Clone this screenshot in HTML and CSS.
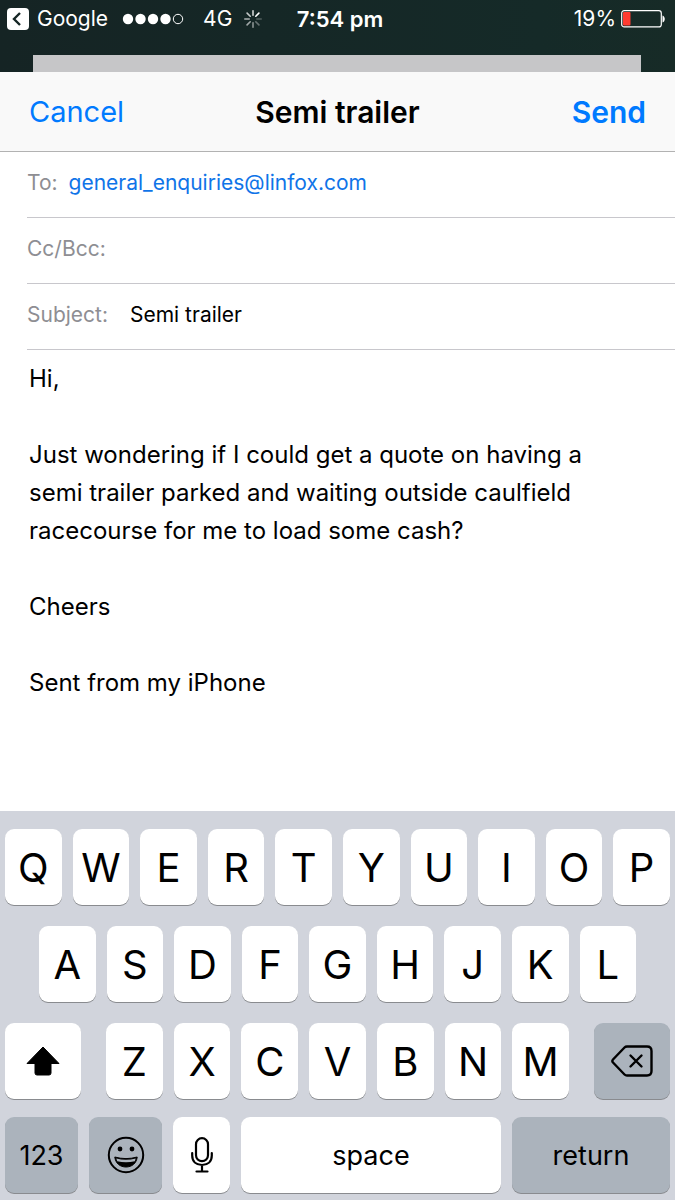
FILE: index.html
```html
<!DOCTYPE html>
<html lang="en">

<head>
    <meta charset="UTF-8">
    <meta name="viewport" content="width=device-width, initial-scale=1.0">
    <title>Semi trailer</title>
    <link rel="stylesheet" href="styles.css">
</head>

<body>
    <div class="phone">
        <div class="top">
            <div class="status">
                <div class="status-left">
                    <a href="#" class="back">
                        <svg width="22" height="22" viewBox="0 0 22 22">
                            <rect width="22" height="22" rx="4" fill="#fff" />
                            <path d="M13 5 7 11l6 6" fill="none" stroke="#152625" stroke-width="2.4" />
                        </svg>
                        <span>Google</span>
                    </a>
                    <svg class="signal" width="62" height="12" viewBox="0 0 62 12">
                        <g fill="#fff">
                            <circle cx="6" cy="6" r="5.2" />
                            <circle cx="18.5" cy="6" r="5.2" />
                            <circle cx="31" cy="6" r="5.2" />
                            <circle cx="43.5" cy="6" r="5.2" />
                        </g>
                        <circle cx="56" cy="6" r="4.7" fill="none" stroke="#fff" />
                    </svg>
                    <span class="network">4G</span>
                    <svg class="spinner" width="18" height="18" viewBox="0 0 18 18" stroke="#fff" stroke-width="1.6" stroke-linecap="round">
                        <path d="M9 .8v4.4" opacity=".8" />
                        <path d="m14.9 3.1-3.1 3.1" />
                        <path d="M17.2 9h-4.4" opacity=".25" />
                        <path d="m14.9 14.9-3.1-3.1" opacity=".35" />
                        <path d="M9 17.2v-4.4" opacity=".5" />
                        <path d="m3.1 14.9 3.1-3.1" opacity=".6" />
                        <path d="M.8 9h4.4" opacity=".65" />
                        <path d="m3.1 3.1 3.1 3.1" opacity=".75" />
                    </svg>
                </div>
                <div class="clock">7:54 pm</div>
                <div class="status-right">
                    <span>19%</span>
                    <svg width="44" height="18" viewBox="0 0 44 18">
                        <rect x=".7" y=".7" width="39.6" height="16.2" rx="2.5" fill="none" stroke="#fff" stroke-width="1.2" />
                        <rect x="2" y="2" width="7.5" height="13.6" rx="1" fill="#ff3b30" />
                        <path d="M41.5 5.5c3 1 3 6 0 7z" fill="#fff" />
                    </svg>
                </div>
            </div>
            <div class="behind"></div>
        </div>

        <header class="nav">
            <button class="nav-btn">Cancel</button>
            <h1>Semi trailer</h1>
            <button class="nav-btn send">Send</button>
        </header>

        <main class="mail">
            <div class="field">
                <label for="to">To:</label>
                <input type="email" id="to" class="to" value="general_enquiries@linfox.com">
            </div>
            <div class="field">
                <label for="cc">Cc/Bcc:</label>
                <input type="text" id="cc">
            </div>
            <div class="field">
                <label for="subject">Subject:</label>
                <input type="text" id="subject" class="subject" value="Semi trailer">
            </div>
            <textarea class="message" aria-label="Message">Hi,

Just wondering if I could get a quote on having a semi trailer parked and waiting outside caulfield racecourse for me to load some cash?

Cheers

Sent from my iPhone</textarea>
        </main>

        <div class="keyboard">
            <div class="row">
                <button class="key">Q</button>
                <button class="key">W</button>
                <button class="key">E</button>
                <button class="key">R</button>
                <button class="key">T</button>
                <button class="key">Y</button>
                <button class="key">U</button>
                <button class="key">I</button>
                <button class="key">O</button>
                <button class="key">P</button>
            </div>
            <div class="row row-two">
                <button class="key">A</button>
                <button class="key">S</button>
                <button class="key">D</button>
                <button class="key">F</button>
                <button class="key">G</button>
                <button class="key">H</button>
                <button class="key">J</button>
                <button class="key">K</button>
                <button class="key">L</button>
            </div>
            <div class="row row-three">
                <button class="key shift" aria-label="Shift">
                    <svg width="34" height="30" viewBox="0 0 34 30">
                        <path d="M17 1 33 17.5H25V27q0 2-2 2H11q-2 0-2-2v-9.5H1z" stroke="#000" stroke-linejoin="round" />
                    </svg>
                </button>
                <button class="key">Z</button>
                <button class="key">X</button>
                <button class="key">C</button>
                <button class="key">V</button>
                <button class="key">B</button>
                <button class="key">N</button>
                <button class="key">M</button>
                <button class="key dark delete" aria-label="Delete">
                    <svg width="42" height="32" viewBox="0 0 42 32" fill="none" stroke="#000" stroke-width="2.4" stroke-linecap="round" stroke-linejoin="round">
                        <path d="M16 1.500H36q4.500 0 4.500 4.500V26q0 4.500-4.500 4.500H16q-1.500 0-2.500-1L2 17.500q-1.300-1.500 0-3L13.500 2.500q1-1 2.500-1z" />
                        <path d="m19.500 10.500 11 11m0-11-11 11" />
                    </svg>
                </button>
            </div>
            <div class="row row-four">
                <button class="key dark word">123</button>
                <button class="key dark" aria-label="Emoji">
                    <svg width="38" height="38" viewBox="0 0 38 38">
                        <circle cx="19" cy="19" r="17.2" fill="none" stroke="#000" stroke-width="2" />
                        <circle cx="13" cy="13" r="2.4" />
                        <circle cx="25" cy="13" r="2.4" />
                        <path d="M7.800 21q11.200 3.200 22.400 0c-.7 6.500-5.500 10-11.200 10S8.500 27.500 7.800 21z" stroke="#000" stroke-linejoin="round" />
                        <path d="M9.300 22.500q9.700 2.600 19.400 0l-.9 2.700q-8.800 2.200-17.600 0z" fill="#abb3bc" />
                    </svg>
                </button>
                <button class="key" aria-label="Dictate">
                    <svg width="22" height="36" viewBox="0 0 22 36" fill="none" stroke="#000" stroke-width="2.2" stroke-linecap="round">
                        <rect x="5" y="1.2" width="12" height="23" rx="6" />
                        <path d="M1.200 16v2.500c0 6 4 9.500 9.800 9.500s9.800-3.500 9.800-9.500V16M11 28v6.500M5.500 34.500h11" />
                    </svg>
                </button>
                <button class="key word">space</button>
                <button class="key dark word">return</button>
            </div>
        </div>
    </div>
</body>

</html>
```
FILE: styles.css
```css
* {
    box-sizing: border-box;
}

body {
    margin: 0;
    font-family: Inter, "Liberation Sans", sans-serif;
    color: #000;
}

button,
input,
textarea {
    font-family: inherit;
    border: none;
    padding: 0;
    margin: 0;
    background: none;
    color: inherit;
    outline: none;
}

svg {
    display: block;
    flex-shrink: 0;
}

.phone {
    min-height: 100vh;
    display: flex;
    flex-direction: column;
    background-color: white;
}

/* status bar */
.top {
    background: linear-gradient(to right, #152424, #152a28 80%, #172b27);
}

.status {
    height: 55px;
    padding: 0 10px 18px 7px;
    display: grid;
    grid-template-columns: 1fr auto 1fr;
    align-items: center;
    color: white;
    font-size: 21px;
}

.status-left,
.status-right,
.back {
    display: flex;
    align-items: center;
}

.back {
    gap: 8px;
    color: white;
    text-decoration: none;
}

.signal {
    margin-left: 14px;
}

.network {
    margin-left: 19px;
}

.spinner {
    margin-left: 12px;
}

.clock {
    padding-left: 8px;
    font-size: 22px;
    font-weight: 600;
}

.status-right {
    justify-content: flex-end;
    gap: 5px;
}

.behind {
    height: 17px;
    margin: 0 34px 0 33px;
    background-color: #c6c6c8;
}

/* title bar */
.nav {
    height: 80px;
    padding: 0 29px;
    display: grid;
    grid-template-columns: 1fr auto 1fr;
    align-items: center;
    background-color: #f9f9f9;
    border-bottom: 1px solid #b2b2b2;
}

.nav h1 {
    margin: 0;
    font-size: 30px;
    font-weight: 600;
}

.nav-btn {
    font-size: 29px;
    color: #007aff;
    justify-self: start;
}

.send {
    font-size: 30px;
    font-weight: 600;
    justify-self: end;
}

/* message fields */
.mail {
    flex: 1;
    display: flex;
    flex-direction: column;
}

.field {
    height: 66px;
    margin-left: 27px;
    padding-bottom: 4px;
    display: flex;
    align-items: center;
    gap: 11px;
    border-bottom: 1px solid #c8c7cc;
    font-size: 21px;
}

.field label {
    color: #8e8e93;
}

.field input {
    flex: 1;
    min-width: 0;
    font-size: 21px;
}

.field .to {
    color: #0f74e8;
}

.field .subject {
    margin-left: 11px;
}

.message {
    flex: 1;
    min-height: 440px;
    padding: 10px 60px 10px 29px;
    font-size: 24px;
    line-height: 38px;
    resize: none;
}

/* keyboard */
.keyboard {
    padding: 18px 5px 7px;
    background-color: #d1d4dc;
}

.row {
    display: flex;
    gap: 11px;
    margin-bottom: 21px;
}

.row-two {
    padding: 0 34px;
}

.row-three {
    margin-bottom: 18px;
}

.row-four {
    display: grid;
    grid-template-columns: 73fr 73fr 57fr 260fr 158fr;
    margin-bottom: 0;
}

.key {
    flex: 1;
    height: 76px;
    display: flex;
    align-items: center;
    justify-content: center;
    background-color: white;
    border-radius: 9px;
    box-shadow: 0 1px 0 #898b8f;
    font-size: 40px;
}

.shift,
.delete {
    flex: 0 0 76px;
}

.shift {
    margin-right: 14px;
}

.delete {
    margin-left: 14px;
}

.dark {
    background-color: #abb3bc;
}

.word {
    font-size: 27px;
}
```
